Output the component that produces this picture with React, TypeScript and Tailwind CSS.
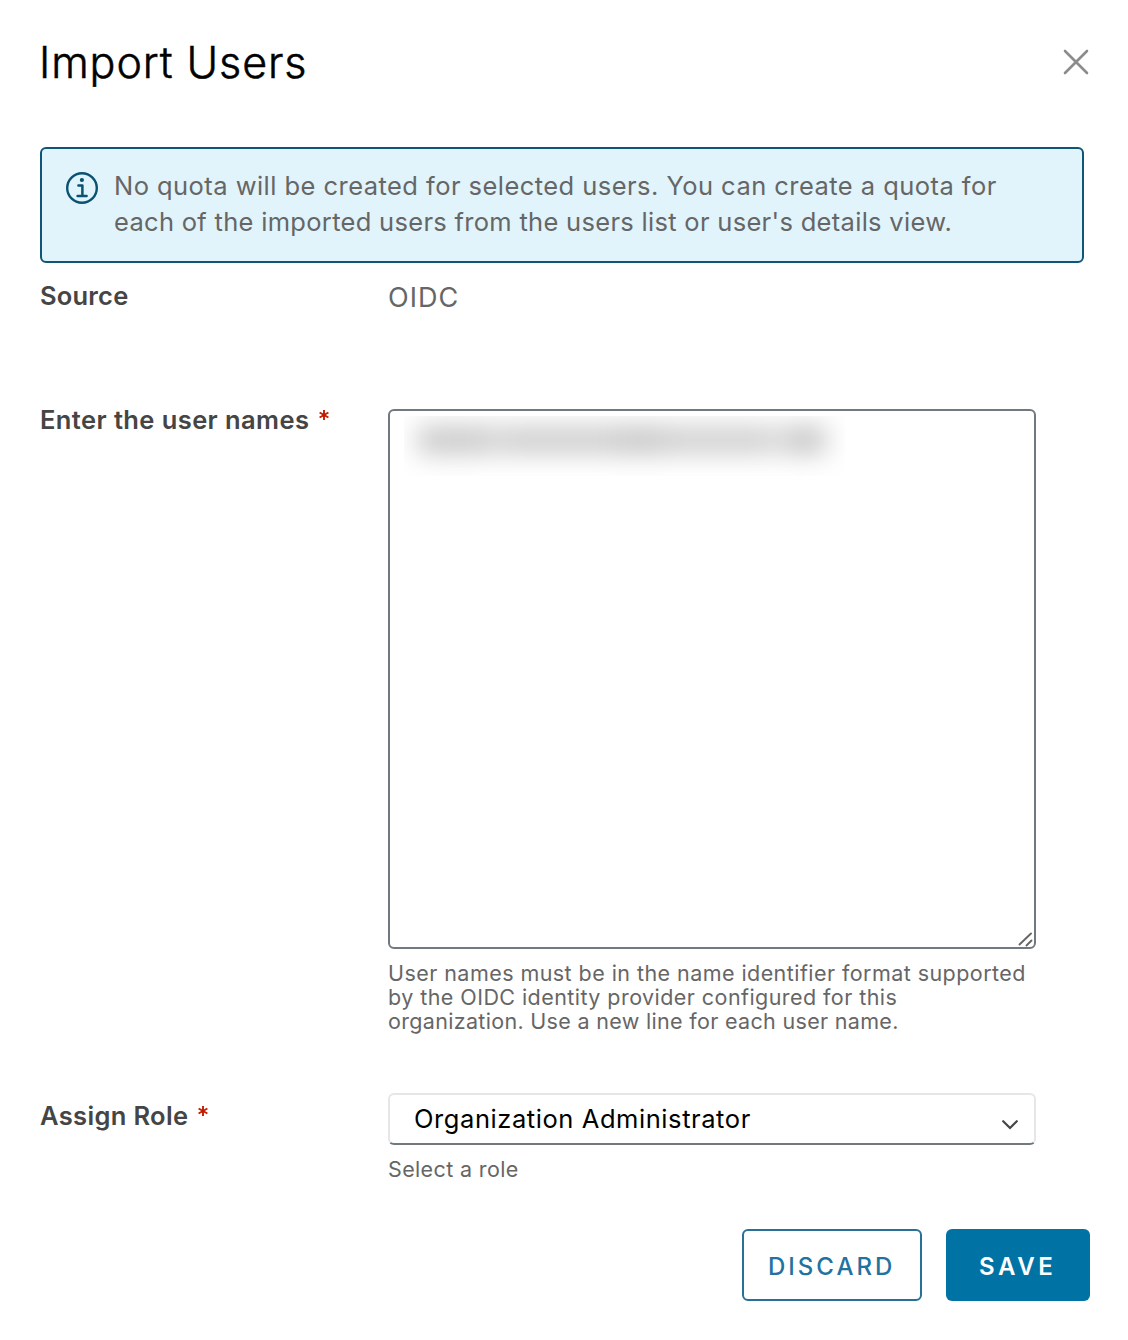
import React from "react";

function InfoIcon() {
  return (
    <svg width="32" height="32" viewBox="0 0 32 32" fill="none" stroke="#0b5172" className="shrink-0">
      <circle cx="16" cy="16" r="14.8" strokeWidth="2.4" />
      <circle cx="15.9" cy="8" r="2.1" fill="#0b5172" stroke="none" />
      <path d="M12.4 13.6h4v10.2M11.6 24h9" strokeWidth="2.5" strokeLinecap="round" strokeLinejoin="round" />
    </svg>
  );
}

function Label({ children, required }: { children: React.ReactNode; required?: boolean }) {
  return (
    <div className="flex w-[348px] shrink-0 whitespace-nowrap text-[25.5px] font-semibold leading-9 text-[#454545]">
      {children}
      {required && (
        <svg width="10" height="10" viewBox="0 0 10 10" stroke="#c21d00" strokeWidth="1.9" className="ml-[10px] mt-[8px]">
          <path d="M5 0v10M.6 2.5l8.8 5M9.4 2.5l-8.8 5" />
        </svg>
      )}
    </div>
  );
}

export default function App() {
  return (
    <div className="h-[1340px] w-[1128px] overflow-hidden bg-white pl-10 font-['Inter',sans-serif]">
      <header className="flex h-[147px] items-start justify-between pr-[39px] pt-[36px]">
        <h1 className="-ml-px whitespace-nowrap text-[43px] font-light leading-[52px] text-black [-webkit-text-stroke:0.5px_black]">
          <span className="tracking-[0.9px]">Import Users</span>
        </h1>
        <button aria-label="Close" className="mt-[13px]">
          <svg width="26" height="26" viewBox="0 0 26 26" fill="none" stroke="#8c8c8c" strokeWidth="2.6" strokeLinecap="round">
            <path d="M2 2l22 22M24 2L2 24" />
          </svg>
        </button>
      </header>

      <div className="flex h-[116px] w-[1044px] rounded-[6px] border-2 border-[#0f5575] bg-[#e1f4fb] pl-6 pt-[19px]">
        <div className="pt-1">
          <InfoIcon />
        </div>
        <p className="ml-4 whitespace-nowrap text-[25.5px] leading-9 text-[#666666]">
          <span className="block tracking-[0.45px]">No quota will be created for selected users. You can create a quota for</span>
          <span className="block tracking-[0.3px]">each of the imported users from the users list or user's details view.</span>
        </p>
      </div>

      <div className="flex h-[146px] pt-[15px]">
        <Label><span className="tracking-[0.2px]">Source</span></Label>
        <span className="mt-[2px] text-[27px] leading-9 text-[#666666]"><span className="tracking-[1px]">OIDC</span></span>
      </div>

      <div className="flex h-[684px]">
        <div className="-mt-[7px]">
          <Label required><span className="tracking-[0.41px]">Enter the user names</span></Label>
        </div>
        <div>
          <div className="relative h-[540px] w-[648px] rounded-[6px] border-2 border-[#70797d]">
            <div className="ml-[14px] mt-[5px] h-[60px] w-[441px] overflow-hidden pl-[14px] pt-[10px]">
              <div className="flex h-[28px] w-[408px] blur-[13px]">
                <div className="w-[70px] bg-[#c8c8c8]" />
                <div className="w-[16px] bg-[#d6d6d6]" />
                <div className="w-[112px] bg-[#cdcdcd]" />
                <div className="w-[48px] bg-[#c6c6c6]" />
                <div className="w-[104px] bg-[#cfcfcf]" />
                <div className="w-[20px] bg-[#dadada]" />
                <div className="w-[38px] bg-[#c6c6c6]" />
              </div>
            </div>
            <svg width="16" height="16" viewBox="0 0 16 16" stroke="#666666" strokeWidth="1.9" strokeLinecap="round" className="absolute bottom-0 right-0">
              <path d="M1.5 13.5L13 2.5M8.5 14.5l5-5" />
            </svg>
          </div>
          <p className="mt-[12px] whitespace-nowrap text-[21.5px] leading-6 text-[#666666]">
            <span className="block tracking-[0.44px]">User names must be in the name identifier format supported</span>
            <span className="block tracking-[0.44px]">by the OIDC identity provider configured for this</span>
            <span className="block tracking-[0.32px]">organization. Use a new line for each user name.</span>
          </p>
        </div>
      </div>

      <div className="flex h-[136px]">
        <div className="pt-[5px]">
          <Label required><span className="tracking-[0.34px]">Assign Role</span></Label>
        </div>
        <div>
          <div className="flex h-[52px] w-[648px] items-start justify-between rounded-[6px] border-2 border-[#e6e6e6] border-b-[#70797d] pl-6 pr-[16px] pt-[6px] text-[25.5px] leading-9 text-black">
            <span className="tracking-[0.57px]">Organization Administrator</span>
            <svg width="16" height="10" viewBox="0 0 16 10" fill="none" stroke="#454545" strokeWidth="2.2" strokeLinecap="round" className="mt-[19px]">
              <path d="M1.2 1.2L8 8l6.8-6.8" />
            </svg>
          </div>
          <p className="mt-[12px] text-[21.5px] leading-6 text-[#666666]"><span className="tracking-[0.36px]">Select a role</span></p>
        </div>
      </div>

      <footer className="flex justify-end gap-6 pr-[38px] text-[24px] leading-9">
        <button className="h-[72px] w-[180px] whitespace-nowrap rounded-[6px] border-2 border-[#2a6f94] pl-[24px] pt-[3px] text-left font-medium text-[#2272a0]">
          <span className="tracking-[3px]">DISCARD</span>
        </button>
        <button className="h-[72px] w-[144px] whitespace-nowrap rounded-[6px] bg-[#0072a3] pl-[33px] pt-[3px] text-left font-semibold text-white">
          <span className="tracking-[3.6px]">SAVE</span>
        </button>
      </footer>
    </div>
  );
}
